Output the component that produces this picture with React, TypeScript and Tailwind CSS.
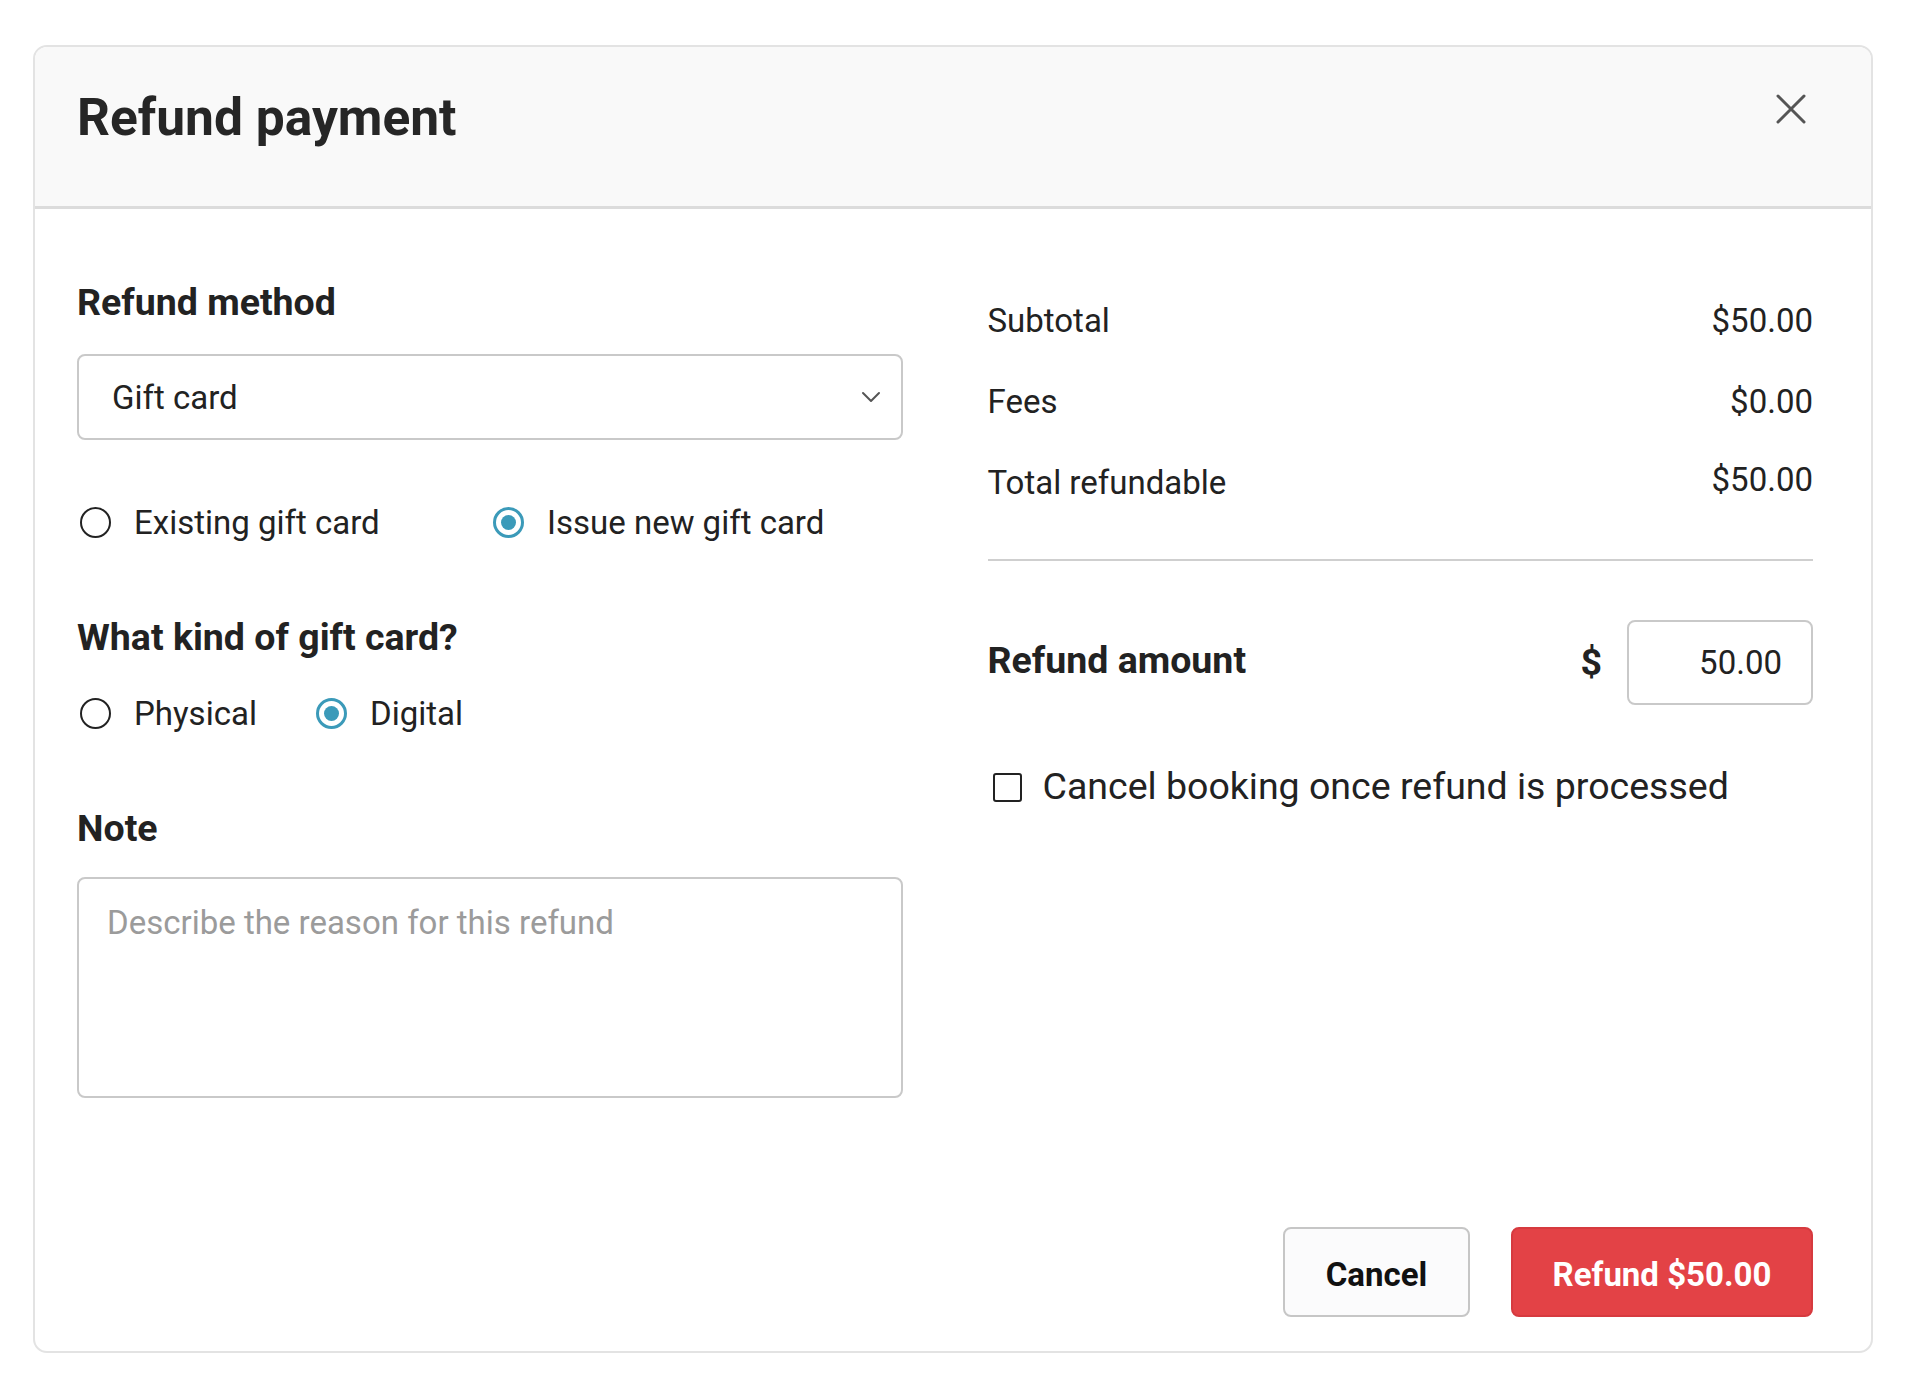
import { useState } from "react";

type RadioProps = {
  label: string;
  checked: boolean;
  onSelect: VoidFunction;
};

function Radio({ label, checked, onSelect }: RadioProps) {
  return (
    <label
      className="ml-[3px] flex items-center gap-[23px] h-[44px] cursor-pointer"
      onClick={onSelect}
    >
      {checked ? (
        <span className="flex items-center justify-center w-[31px] h-[31px] rounded-full border-[3px] border-[#3b9ab9] bg-white">
          <span className="w-[15px] h-[15px] rounded-full bg-[#3b9ab9]" />
        </span>
      ) : (
        <span className="w-[31px] h-[31px] rounded-full border-[2.5px] border-[#222]" />
      )}
      <span className="text-[33px] leading-none text-[#222]">{label}</span>
    </label>
  );
}

export default function App() {
  // ギフトカードの種類
  const [cardSource, setCardSource] = useState<"existing" | "new">("new");
  const [cardKind, setCardKind] = useState<"physical" | "digital">("digital");
  const [cancelBooking, setCancelBooking] = useState(false);

  return (
    <div className="min-h-screen bg-white pt-[45px] pl-[33px] pr-[45px] font-['Roboto',sans-serif] text-[#222]">
      <div className="w-[1840px] rounded-[14px] border-2 border-[#e3e3e3] bg-white overflow-hidden">
        <div className="box-border h-[162px] flex items-start justify-between bg-[#f9f9f9] border-b-[3px] border-[#dcdcdc] pl-[42px] pr-[64px]">
          <h1 className="mt-[45px] text-[51.5px] leading-none font-bold text-[#262626]">
            Refund payment
          </h1>
          <button className="mt-[46px] w-[32px] h-[32px] flex items-center justify-center text-[#555]">
            <svg width="30" height="30" viewBox="0 0 30 30" fill="none">
              <path
                d="M2 2L28 28M28 2L2 28"
                stroke="currentColor"
                strokeWidth="3"
                strokeLinecap="round"
              />
            </svg>
          </button>
        </div>

        <div className="flex flex-col pl-[42px] pr-[58px] pb-[34px]">
          <div className="grid grid-cols-2 gap-[85px] items-start">
            {/* 左側 */}
            <div className="pt-[72px] flex flex-col">
              <h2 className="h-[44px] flex items-center text-[37.5px] leading-none font-bold">
                Refund method
              </h2>
              <div className="mt-[29px] h-[86px] flex items-center justify-between rounded-[8px] border-[2.5px] border-[#c9c9c9] pl-[33px] pr-[20px]">
                <span className="text-[33px] leading-none">Gift card</span>
                <svg width="20" height="12" viewBox="0 0 20 12" fill="none">
                  <path
                    d="M2 2L10 10L18 2"
                    stroke="#555"
                    strokeWidth="2"
                    strokeLinecap="round"
                    strokeLinejoin="round"
                  />
                </svg>
              </div>
              <div className="mt-[60px] flex items-center">
                <div className="w-[413px]">
                  <Radio
                    label="Existing gift card"
                    checked={cardSource === "existing"}
                    onSelect={() => setCardSource("existing")}
                  />
                </div>
                <Radio
                  label="Issue new gift card"
                  checked={cardSource === "new"}
                  onSelect={() => setCardSource("new")}
                />
              </div>

              <h2 className="mt-[72px] h-[44px] flex items-center text-[37.5px] leading-none font-bold">
                What kind of gift card?
              </h2>
              <div className="mt-[31px] flex items-center">
                <div className="w-[236px]">
                  <Radio
                    label="Physical"
                    checked={cardKind === "physical"}
                    onSelect={() => setCardKind("physical")}
                  />
                </div>
                <Radio
                  label="Digital"
                  checked={cardKind === "digital"}
                  onSelect={() => setCardKind("digital")}
                />
              </div>

              <h2 className="mt-[72px] h-[44px] flex items-center text-[37.5px] leading-none font-bold">
                Note
              </h2>
              <textarea
                className="mt-[26px] h-[221px] resize-none rounded-[8px] border-[2.5px] border-[#c9c9c9] px-[28px] py-[22px] text-[33px] leading-[44px] text-[#222] placeholder:text-[#9b9b9b] outline-none"
                placeholder="Describe the reason for this refund"
              />
            </div>

            {/* 右側 */}
            <div className="pt-[89px] flex flex-col">
              <div className="h-[44px] flex items-center justify-between text-[33px] leading-none">
                <span>Subtotal</span>
                <span>$50.00</span>
              </div>
              <div className="mt-[37px] h-[44px] flex items-center justify-between text-[33px] leading-none">
                <span>Fees</span>
                <span>$0.00</span>
              </div>
              <div className="mt-[37px] h-[44px] flex items-center justify-between text-[33px] leading-none">
                <span>Total refundable</span>
                <span className="-mt-[6px]">$50.00</span>
              </div>
              <div className="mt-[55px] h-[2px] bg-[#cfcfcf]" />

              <div className="mt-[59px] h-[85px] flex items-center justify-between">
                <span className="-mt-[4px] text-[37.5px] leading-none font-bold">
                  Refund amount
                </span>
                <div className="flex items-center gap-[25px]">
                  <span className="text-[37.5px] leading-none font-bold">$</span>
                  <input
                    className="w-[186px] h-[85px] rounded-[8px] border-[2.5px] border-[#c9c9c9] pr-[29px] text-right text-[33px] text-[#222] outline-none"
                    defaultValue="50.00"
                  />
                </div>
              </div>

              <label
                className="mt-[60px] h-[44px] flex items-center gap-[21px] cursor-pointer"
                onClick={() => setCancelBooking(!cancelBooking)}
              >
                <span className="ml-[5px] w-[29px] h-[29px] rounded-[3px] border-[2.5px] border-[#222]" />
                <span className="text-[37.5px] leading-none">
                  Cancel booking once refund is processed
                </span>
              </label>
            </div>
          </div>

          <div className="mt-[129px] flex justify-end gap-[41px]">
            <button className="w-[187px] h-[90px] pt-[5px] rounded-[8px] border-[2.5px] border-[#c6c6c6] bg-[#fbfbfc] text-[33px] font-bold text-[#111]">
              Cancel
            </button>
            <button className="w-[302px] h-[90px] pt-[5px] rounded-[8px] border-2 border-[#d63a3f] bg-[#e34246] text-[33px] font-bold text-white">
              Refund $50.00
            </button>
          </div>
        </div>
      </div>
    </div>
  );
}
